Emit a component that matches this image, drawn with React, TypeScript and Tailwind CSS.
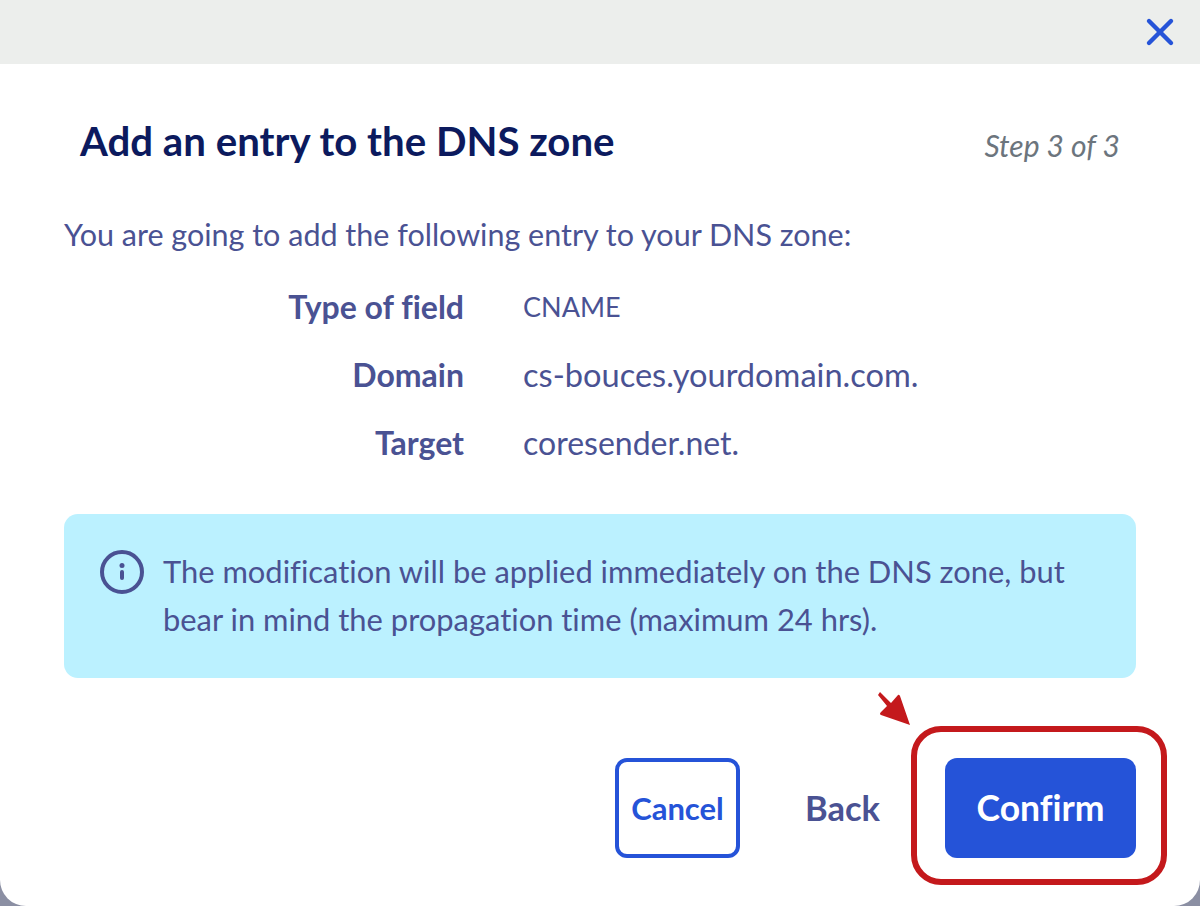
import { X } from 'lucide-react';

const rows = [
  { label: 'Type of field', value: 'CNAME', size: 'text-[27px]' },
  { label: 'Domain', value: 'cs-bouces.yourdomain.com.', size: 'text-[32.6px]' },
  { label: 'Target', value: 'coresender.net.', size: 'text-[32px]' },
];

export default function App() {
  return (
    <div className="h-[906px] w-[1200px] overflow-hidden bg-[#8b8fa3] font-['Lato',sans-serif] text-[#4a5293] [font-variant-ligatures:none]">
      <div className="relative h-[906px] rounded-b-[26px] bg-white">
        {/* header */}
        <div className="flex h-16 items-center justify-end bg-[#eceeec] pr-[18px]">
          <X size={44} strokeWidth={2.4} className="text-[#2553d8]" />
        </div>

        <div className="px-16">
          {/* title */}
          <div className="flex items-center justify-between pt-[53px] pr-4 pl-4">
            <h1 className="text-[40.2px] leading-[48px] font-bold text-[#0c1a5e]">Add an entry to the DNS zone</h1>
            <span className="mt-2 text-[30px] leading-10 text-[#6c757d] italic">Step 3 of 3</span>
          </div>

          <p className="mt-[49px] text-[30.5px] leading-10">You are going to add the following entry to your DNS zone:</p>

          {/* dns entry */}
          <div className="mt-[33px] flex flex-col gap-7">
            {rows.map((row) => (
              <div key={row.label} className="flex h-10 items-center leading-10">
                <span className="w-[400px] text-right text-[32px] font-bold">{row.label}</span>
                <span className={`ml-[59px] ${row.size}`}>{row.value}</span>
              </div>
            ))}
          </div>

          {/* info */}
          <div className="mt-[51px] flex h-[164px] gap-[19px] rounded-[14px] bg-[#bbf1ff] pt-[36px] pl-9">
            <svg width="44" height="44" viewBox="0 0 44 44" fill="none" className="shrink-0">
              <circle cx="22" cy="22" r="20" stroke="#4a5293" strokeWidth="4" />
              <circle cx="22" cy="15.5" r="2.5" fill="#4a5293" />
              <rect x="20" y="20" width="4" height="10" rx="2" fill="#4a5293" />
            </svg>
            <p className="-mt-[2px] text-[30.9px] leading-12">
              The modification will be applied immediately on the DNS zone, but
              <br />
              bear in mind the propagation time (maximum 24 hrs).
            </p>
          </div>

          {/* actions */}
          <div className="mt-20 flex items-center justify-end">
            <button className="flex h-[100px] w-[125px] items-center justify-center rounded-xl border-4 border-[#2553d8] text-[31px] font-bold text-[#2553d8]">
              Cancel
            </button>
            <button className="ml-[65px] text-[34.5px] font-bold">Back</button>
            <button className="ml-[65px] flex h-[100px] w-[191px] items-center justify-center rounded-xl bg-[#2553d8] text-[35.5px] font-bold text-white">
              Confirm
            </button>
          </div>
        </div>

        {/* annotation */}
        <div className="absolute top-[726px] left-[911px] h-[159px] w-[256px] rounded-[30px] border-[6px] border-[#c4191c]" />
        <svg width="36" height="36" viewBox="0 0 36 36" className="absolute top-[691px] left-[877px]">
          <path d="M3 1 L14 12 L21 4 Q22 3 23 5 L33 34 L4 24 Q2 23 4 21 L10 15 L1 4 Z" fill="#c4191c" />
        </svg>
      </div>
    </div>
  );
}
